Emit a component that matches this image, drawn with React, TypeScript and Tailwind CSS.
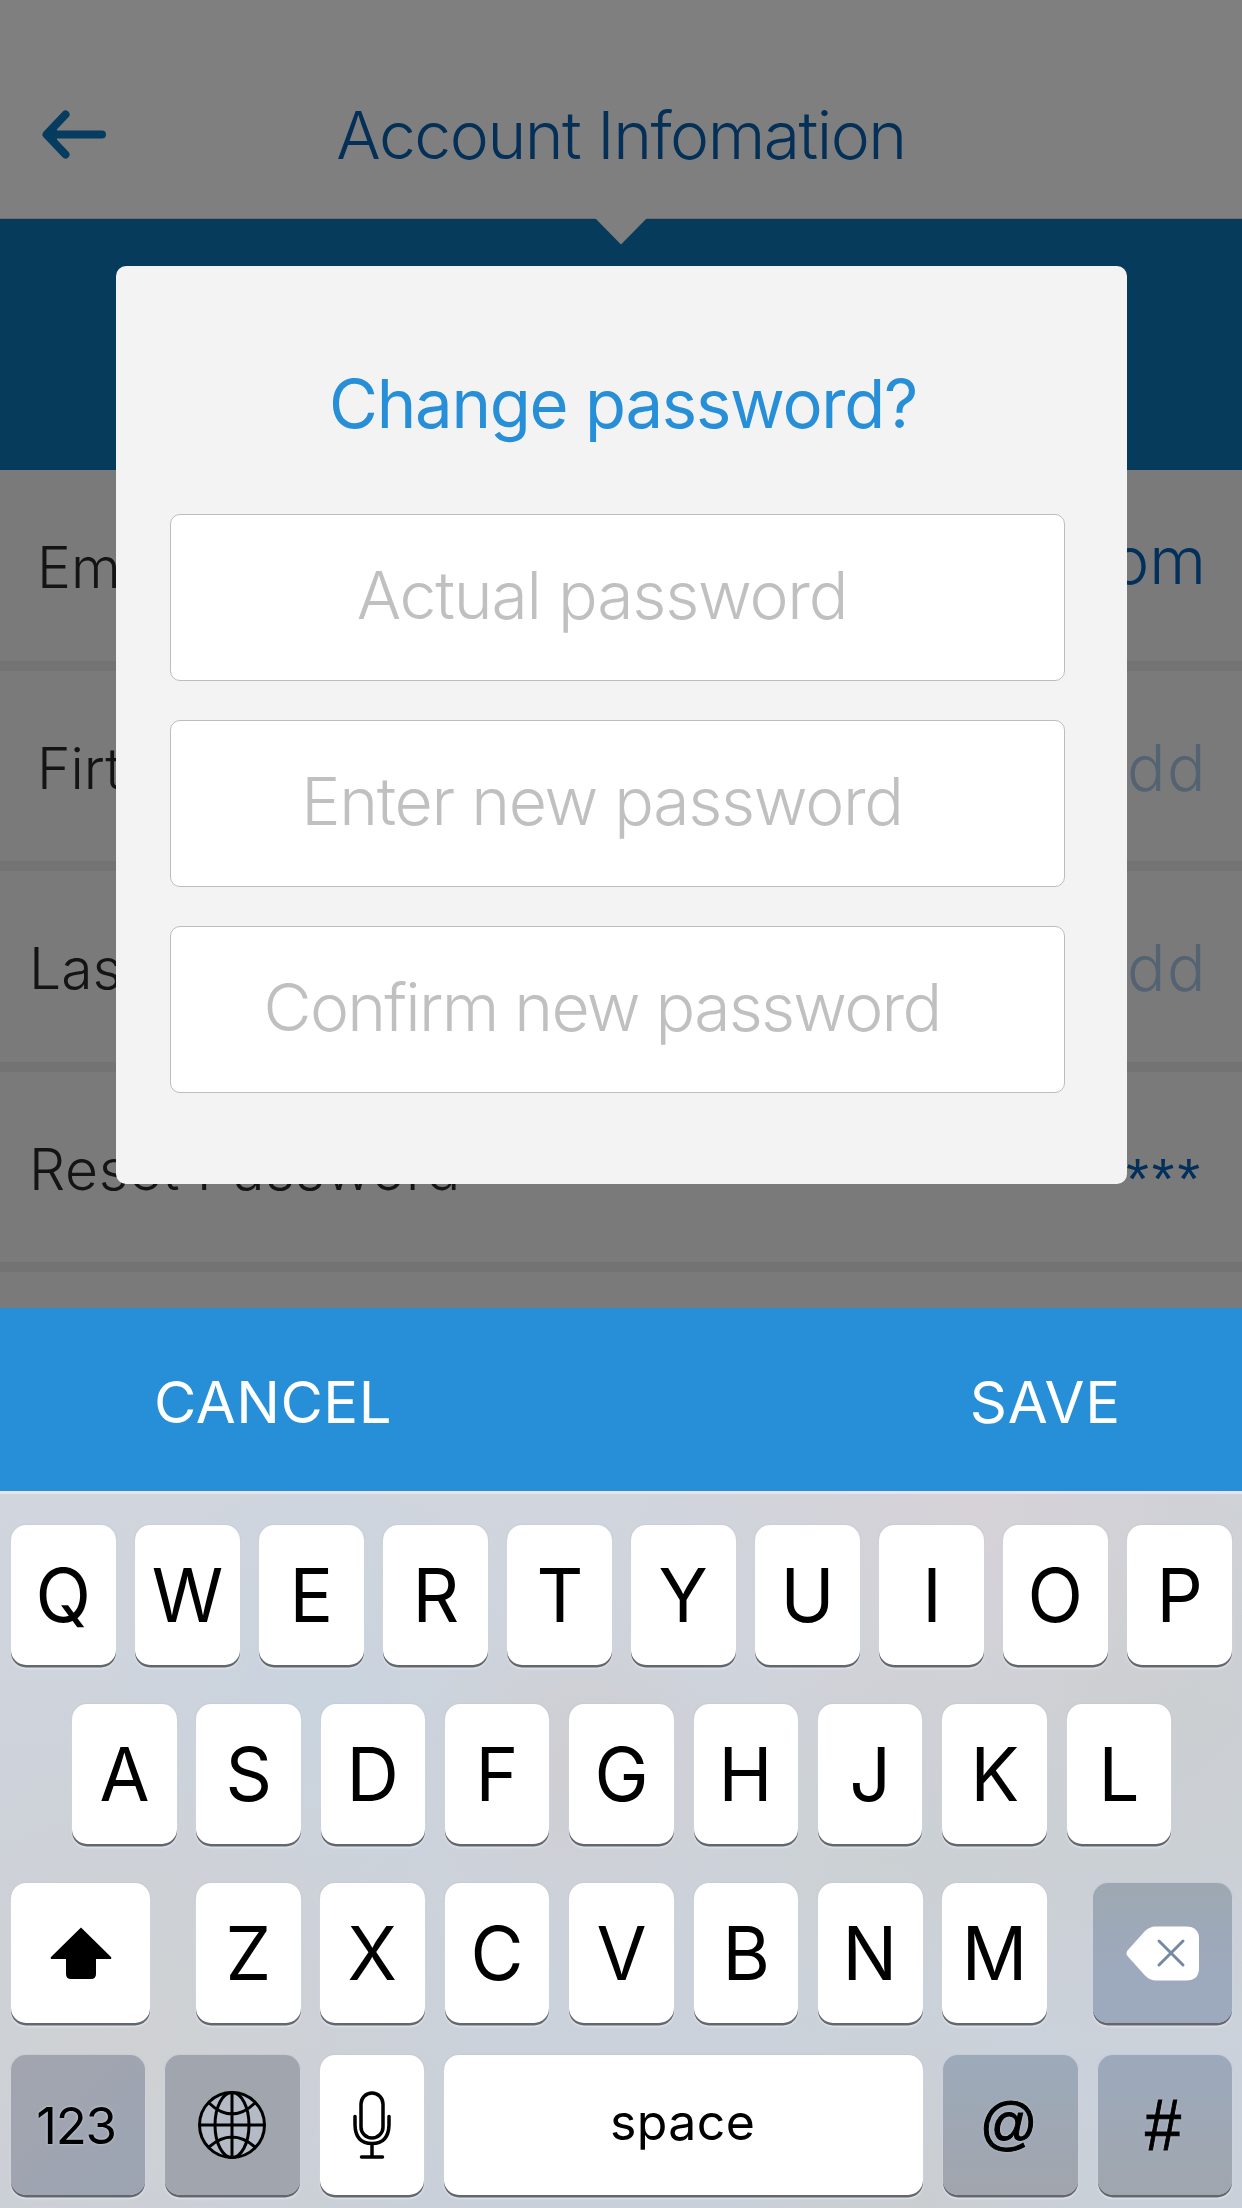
import React from "react";

type RowProps = {
  label: string;
  value: string;
  labelClass: string;
  valueClass: string;
};

const INTER = "font-['Inter','Liberation_Sans',sans-serif]";

function AccountRow({ label, value, labelClass, valueClass }: RowProps) {
  return (
    <div className="flex h-[200.5px] items-center justify-between border-b-[10px] border-[#e6e6e6] bg-[#f4f4f4] whitespace-nowrap">
      <span className={`text-[57px] leading-none font-light text-[#282828] ${labelClass}`}>{label}</span>
      <span className={`leading-none ${valueClass}`}>{value}</span>
    </div>
  );
}

function AccountScreen() {
  return (
    <div className="flex h-[1308px] flex-col overflow-hidden bg-[#f4f4f4]">
      <header className="relative flex h-[219px] shrink-0 items-center justify-center border-b border-[#d8dde0] bg-white pt-[51px]">
        <svg className="absolute top-[110px] left-[40px]" width="66" height="49" viewBox="0 0 66 49" fill="none" stroke="#0a78c0" strokeWidth="8" strokeLinecap="round" strokeLinejoin="round">
          <path d="M25.500 4.500L6.500 24.500L25.500 44.500M8 24.500H62" />
          <path d="M8 24.500L16 18V31Z" fill="#0a78c0" strokeWidth="2" />
        </svg>
        <h1 className="text-[66px] leading-none font-light tracking-[-1.5px] whitespace-nowrap text-[#0860ae]">Account Infomation</h1>
      </header>
      <div className="flex h-[251px] shrink-0 justify-center bg-[#0c76b8]">
        <svg className="relative -mt-px" width="52" height="27" viewBox="0 0 52 27">
          <path d="M0 0H52L26 26.500Z" fill="#fff" />
        </svg>
      </div>
      <div className="shrink-0">
        <AccountRow label="Email" value="com" labelClass="pl-[37px] pt-[5px]" valueClass="pr-[36px] pb-[9px] text-[65px] font-light text-[#0460b4]" />
        <AccountRow label="Firt Name" value="Add" labelClass="pl-[37px] pt-[5px]" valueClass="pr-[35px] pt-[4px] text-[64px] font-light tracking-[1.5px] text-[#a8c6e4]" />
        <AccountRow label="Last Name" value="Add" labelClass="pl-[29px] pt-[5px]" valueClass="pr-[35px] pt-[4px] text-[64px] font-light tracking-[1.5px] text-[#a8c6e4]" />
        <AccountRow label="Reset Password" value="******" labelClass="pl-[29px] pt-[5px] tracking-[0.65px]" valueClass="pr-[39px] pt-[24px] font-['Liberation_Sans'] text-[58px] tracking-[3px] text-[#0460b4]" />
      </div>
    </div>
  );
}

function PasswordField({ label, tracking }: { label: string; tracking: string }) {
  return (
    <div className="flex h-[167px] items-center justify-center rounded-[10px] border border-[#bdbdbd] bg-white pr-[31px] pb-[5px]">
      <span className={`text-[66px] leading-none font-light whitespace-nowrap text-[#c0c0c0] ${tracking}`}>{label}</span>
    </div>
  );
}

function ChangePasswordDialog() {
  return (
    <div className="absolute top-[266px] left-[116px] flex h-[917.5px] w-[1011px] flex-col rounded-[10px] bg-[#f3f3f3] pr-[62px] pl-[54px]">
      <h2 className="flex h-[248px] items-center justify-center pt-[27px] pl-[11px] text-[67px] leading-none tracking-[-1.25px] whitespace-nowrap text-[#278fd8]">Change password?</h2>
      <div className="flex flex-col gap-[39px]">
        <PasswordField label="Actual password" tracking="tracking-[-1.2px]" />
        <PasswordField label="Enter new password" tracking="tracking-[-1.3px]" />
        <PasswordField label="Confirm new password" tracking="tracking-[-1.75px]" />
      </div>
    </div>
  );
}

const KEY = "flex h-[140px] shrink-0 items-center justify-center rounded-[15px] text-black leading-none shadow-[0_2.5px_0_#64676b,0_4px_2px_#dfe4ee,0_0_2px_#b9bec8]";

const SYMBOL = "[text-shadow:0_0_3px_#ccd3e0] [-webkit-text-stroke:1px_#000]";

function LetterKey({ letter }: { letter: string }) {
  return (
    <div className={`${KEY} w-[104.5px] bg-white`}>
      <span className="scale-x-[0.98] text-[74px]">{letter}</span>
    </div>
  );
}

function Keyboard() {
  return (
    <div
      className="h-[717px] border-t-[3px] border-[#e6e5e9] pt-[31px]"
      style={{
        background:
          "radial-gradient(circle at 78% 0%, #d6d2d8 0, transparent 28%), radial-gradient(circle at 92% 26%, #caced0 0, transparent 30%), radial-gradient(circle at 47% 38%, #cfced2 0, transparent 22%), radial-gradient(circle at 26% 27%, #c9d4de 0, transparent 20%), radial-gradient(circle at 10% 75%, #cfd1d3 0, transparent 28%), radial-gradient(circle at 70% 48%, #ccd1d4 0, transparent 24%), radial-gradient(circle at 74% 100%, #caced1 0, transparent 16%), linear-gradient(#d0d5de, #cad0d9)",
      }}
    >
      <div className="flex justify-between pr-[10px] pl-[11px]">
        {"QWERTYUIOP".split("").map((k) => <LetterKey key={k} letter={k} />)}
      </div>
      <div className="mt-[39px] flex justify-between pr-[71px] pl-[72px]">
        {"ASDFGHJKL".split("").map((k) => <LetterKey key={k} letter={k} />)}
      </div>
      <div className="mt-[39px] flex justify-between pr-[10px] pl-[11px]">
        <div className={`${KEY} w-[139px] bg-white`}>
          <svg width="62" height="53" viewBox="0 0 62 53">
            <path d="M31 0.500L61 30Q62 32 60 32H46V47Q46 52 41 52H21Q16 52 16 47V32H2Q0 32 1 30Z" fill="#000" />
          </svg>
        </div>
        <div className="flex w-[851px] justify-between">
          {"ZXCVBNM".split("").map((k) => <LetterKey key={k} letter={k} />)}
        </div>
        <div className={`${KEY} w-[139px] bg-linear-to-b from-[#9ea8b2] to-[#9daabd] to-60%`}>
          <svg className="ml-px" width="74" height="55" viewBox="0 0 74 55" fill="none">
            <path d="M1.500 24.500L19 5Q24 0.500 29 0.500H60Q73 0.500 73 13V42Q73 54.500 60 54.500H30Q24 54.500 19 49.500L1.500 30Q-0.500 27.250 1.500 24.500Z" fill="#fff" />
            <path d="M33 15L57 39M57 15L33 39" stroke="#7389a6" strokeWidth="3" strokeLinecap="round" />
          </svg>
        </div>
      </div>
      <div className="mt-[32px] flex justify-between pr-[10px] pl-[11px]">
        <div className={`${KEY} w-[134px] bg-linear-to-br from-[#a2a5ae] to-[#9ca4b3]`}>
          <span className="mr-[4px] text-[51px] tracking-[-1.3px] [text-shadow:0_0_3px_#ccd3e0]">123</span>
        </div>
        <div className={`${KEY} w-[135px] bg-linear-to-b from-[#a1a5ae] to-[#a0a5ae]`}>
          <svg width="68" height="68" viewBox="0 0 68 68" fill="none" stroke="#000" strokeWidth="3">
            <circle cx="34" cy="34" r="34" fill="#b4bac6" stroke="none" />
            <circle cx="34" cy="34" r="32.500" />
            <ellipse cx="34" cy="34" rx="17" ry="32.500" />
            <path d="M34 1.500V66.500M1.500 34H66.500M11 12Q34 34 57 12M11 56Q34 36 57 56" />
          </svg>
        </div>
        <div className={`${KEY} w-[104.5px] bg-white`}>
          <svg width="38" height="68" viewBox="0 0 38 68" fill="none" stroke="#000" strokeWidth="3.500" strokeLinecap="round">
            <rect x="8" y="2" width="22" height="45" rx="11" />
            <path d="M2 25.500V34Q2.500 52.500 19 52.500Q35.500 52.500 36 34V25.500M19 52.500V66M8.500 66H29.500" />
          </svg>
        </div>
        <div className={`${KEY} w-[479px] bg-white pb-[6px]`}>
          <span className="mr-[2px] text-[50px] tracking-[0.4px]">space</span>
        </div>
        <div className={`${KEY} w-[135px] bg-linear-to-b from-[#9caaba] to-[#a1a5ad] pb-[3px]`}>
          <span className={`mr-[4px] font-['Liberation_Sans'] text-[57px] ${SYMBOL}`}>@</span>
        </div>
        <div className={`${KEY} w-[134px] bg-linear-to-b from-[#9ca9bc] to-[#a0a6ae]`}>
          <span className={`mr-[4px] scale-x-[0.9] font-['Liberation_Sans'] text-[72px] ${SYMBOL}`}>#</span>
        </div>
      </div>
    </div>
  );
}

export default function App() {
  return (
    <div className={`relative h-[2208px] w-[1242px] overflow-hidden ${INTER}`}>
      <AccountScreen />
      <div className="absolute inset-x-0 top-0 h-[1308px] bg-black/50" />
      <ChangePasswordDialog />
      <div className="flex h-[183px] items-center justify-between bg-[#278fd8] pr-[121px] pl-[154px] pt-[4px] text-[58px] leading-none text-white">
        <span className="tracking-[0.5px]">CANCEL</span>
        <span className="tracking-[0.8px]">SAVE</span>
      </div>
      <Keyboard />
    </div>
  );
}
